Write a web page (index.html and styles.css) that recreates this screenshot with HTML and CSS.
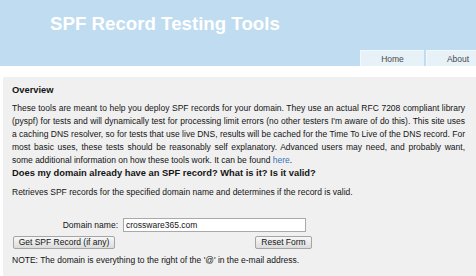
FILE: index.html
```html
<!doctype html>
<html lang="en">
  <head>
    <meta charset="UTF-8" />
    <title>SPF Record Testing Tools</title>
    <link rel="stylesheet" href="styles.css">
  </head>
  <body>
    <header class="site-header">
      <h1>SPF Record Testing Tools</h1>
      <nav class="tabs">
        <a href="#" class="tab tab-home">Home</a>
        <a href="#" class="tab tab-about">About</a>
      </nav>
    </header>

    <main class="content">
      <h2>Overview</h2>
      <p class="intro">
        These tools are meant to help you deploy SPF records for your domain. They use an actual RFC 7208 compliant library
        (pyspf) for tests and will dynamically test for processing limit errors (no other testers I'm aware of do this). This site uses
        a caching DNS resolver, so for tests that use live DNS, results will be cached for the Time To Live of the DNS record. For
        most basic uses, these tests should be reasonably self explanatory. Advanced users may need, and probably want,
        some additional information on how these tools work. It can be found <a href="#">here</a>.
      </p>

      <h2>Does my domain already have an SPF record? What is it? Is it valid?</h2>
      <p class="desc">Retrieves SPF records for the specified domain name and determines if the record is valid.</p>

      <form class="lookup-form">
        <label for="domain" class="domain-label">Domain name:</label>
        <input type="text" id="domain" value="crossware365.com" />
        <button type="submit" class="btn-get">Get SPF Record (if any)</button>
        <button type="reset" class="btn-reset">Reset Form</button>
      </form>

      <p>NOTE: The domain is everything to the right of the '@' in the e-mail address.</p>
    </main>
  </body>
</html>
```

FILE: styles.css
```css
:root {
  --header-bg: #bfdcf0;
  --tab-bg: #e6f1f8;
  --content-bg: #f0f0f0;
  --text-color: #141414;
  --link-color: #3672bd;
}

* {
  box-sizing: border-box;
  margin: 0;
  padding: 0;
}

body {
  font-family: "Liberation Sans", Arial, sans-serif;
  font-size: 8.5px;
  line-height: 13px;
  color: var(--text-color);
  background: #fff;
  overflow: hidden;
}

.site-header {
  height: 66px;
  background-color: var(--header-bg);
  display: flex;
  flex-direction: column;
  justify-content: space-between;
}

.site-header h1 {
  font-size: 18.7px;
  line-height: 22px;
  font-weight: bold;
  color: #fff;
  padding: 13px 0 0 50px;
}

.tabs {
  display: flex;
  justify-content: flex-end;
  gap: 2px;
}

.tab {
  display: block;
  height: 16px;
  line-height: 16px;
  background-color: var(--tab-bg);
  color: #4a4a4a;
  text-decoration: none;
  text-align: center;
  border-top: 1px solid #f3f8fc;
  border-left: 1px solid #f3f8fc;
}

.tab-home {
  width: 64px;
}

.tab-about {
  width: 50px;
  padding-left: 13px;
}

.content {
  margin: 11px 0 0 3px;
  padding: 7px 11px 20px 9px;
  background-color: var(--content-bg);
}

.content h2 {
  font-size: 9.35px;
  line-height: 12px;
  font-weight: bold;
}

.content h2:first-child {
  margin-bottom: 6px;
}

.intro {
  text-align: justify;
}

.desc {
  margin-top: 7px;
}

.content a {
  color: var(--link-color);
  text-decoration: none;
}

.lookup-form {
  display: grid;
  grid-template-columns: 108px 192px;
  align-items: center;
  row-gap: 4px;
  margin: 19px 0 5px;
}

.domain-label {
  text-align: right;
  padding-right: 2px;
}

#domain {
  width: 183px;
  height: 14px;
  margin-left: 3px;
  font-family: inherit;
  font-size: 8.5px;
  padding: 0 2px;
  border: 1px solid #a9a9a9;
  background: #fff;
  color: #141414;
}

.lookup-form button {
  font-family: inherit;
  font-size: 8.5px;
  height: 13px;
  line-height: 11px;
  padding: 0;
  border: 1px solid #a5a5a5;
  border-radius: 2px;
  background: linear-gradient(#f7f7f7, #dcdcdc);
  color: #141414;
}

.btn-get {
  justify-self: start;
  width: 102px;
  margin-left: 1px;
}

.btn-reset {
  justify-self: end;
  width: 57px;
}
```
